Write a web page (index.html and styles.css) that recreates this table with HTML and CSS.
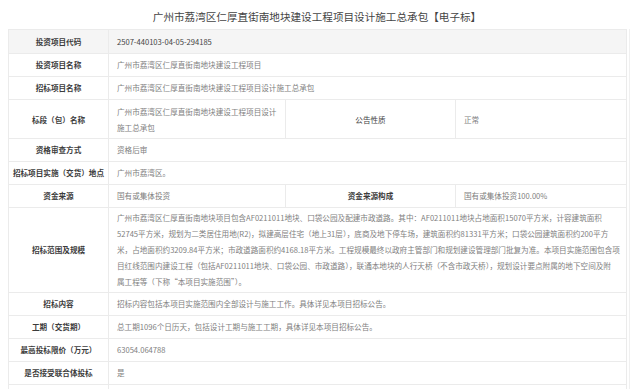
FILE: index.html
```html
<!DOCTYPE html>
<html lang="zh-CN">
<head>
<meta charset="utf-8">
<link rel="stylesheet" href="styles.css">
</head>
<body>
<div class="page">
  <h1 class="title">广州市荔湾区仁厚直街南地块建设工程项目设计施工总承包【电子标】</h1>
  <div class="frame">
  <table class="info">
    <colgroup>
      <col class="c1"><col class="c2"><col class="c3"><col class="c4">
    </colgroup>
    <tr class="head">
      <th>投资项目代码</th><td colspan="3">2507-440103-04-05-294185</td>
    </tr>
    <tr>
      <th>投资项目名称</th><td colspan="3">广州市荔湾区仁厚直街南地块建设工程项目</td>
    </tr>
    <tr>
      <th>招标项目名称</th><td colspan="3">广州市荔湾区仁厚直街南地块建设工程项目设计施工总承包</td>
    </tr>
    <tr class="tall">
      <th>标段（包）名称</th><td>广州市荔湾区仁厚直街南地块建设工程项目设计<br>施工总承包</td>
      <th class="plain">公告性质</th><td>正常</td>
    </tr>
    <tr>
      <th>资格审查方式</th><td colspan="3">资格后审</td>
    </tr>
    <tr>
      <th class="long">招标项目实施（交货）地点</th><td colspan="3">广州市荔湾区。</td>
    </tr>
    <tr>
      <th>资金来源</th><td>国有或集体投资</td>
      <th>资金来源构成</th><td>国有或集体投资100.00%</td>
    </tr>
    <tr>
      <th>招标范围及规模</th>
      <td colspan="3" class="multi">广州市荔湾区仁厚直街南地块项目包含AF0211011地块、口袋公园及配建市政道路。其中：AF0211011地块占地面积15070平方米，计容建筑面积<br>52745平方米，规划为二类居住用地(R2)，拟建高层住宅（地上31层），底商及地下停车场，建筑面积约81331平方米；口袋公园建筑面积约200平方<br>米，占地面积约3209.84平方米；市政道路面积约4168.18平方米。工程规模最终以政府主管部门和规划建设管理部门批复为准。本项目实施范围包含项<br>目红线范围内建设工程（包括AF0211011地块、口袋公园、市政道路），联通本地块的人行天桥（不含市政天桥），规划设计要点附属的地下空间及附<br>属工程等（下称“本项目实施范围”）。</td>
    </tr>
    <tr>
      <th>招标内容</th><td colspan="3">招标内容包括本项目实施范围内全部设计与施工工作。具体详见本项目招标公告。</td>
    </tr>
    <tr>
      <th>工期（交货期）</th><td colspan="3">总工期1096个日历天，包括设计工期与施工工期，具体详见本项目招标公告。</td>
    </tr>
    <tr>
      <th>最高投标限价（万元）</th><td colspan="3">63054.064788</td>
    </tr>
    <tr>
      <th>是否接受联合体投标</th><td colspan="3">是</td>
    </tr>
    <tr>
      <th>&nbsp;</th><td colspan="3">&nbsp;</td>
    </tr>
  </table>
  </div>
</div>
</body>
</html>
```
FILE: styles.css
```css
html, body {
  margin: 0;
  padding: 0;
  background: #fff;
}
body {
  font-family: "Noto Sans CJK SC", "Noto Sans", sans-serif;
  color: #333;
}
.page {
  width: 624px;
  padding: 0 0 0 8px;
}
.title {
  margin: 0;
  padding-top: 5px;
  height: 24px;
  line-height: 24px;
  font-size: 10.6px;
  font-weight: normal;
  text-align: center;
  color: #444;
  width: 618px;
}
.frame {
  width: 621px;
  border-right: 1px solid #f0f0f0;
}
.info {
  width: 618px;
  border-collapse: collapse;
  table-layout: fixed;
  font-size: 7.6px;
  border: 1px solid #e8e8e8;
}
.c1 { width: 100px; }
.c2 { width: 177px; }
.c3 { width: 170px; }
.c4 { width: 171px; }
.info th, .info td {
  border: 1px solid #ebebeb;
  line-height: 16px;
  padding: 3px 8px;
  vertical-align: middle;
  white-space: nowrap;
}
.info th {
  font-weight: bold;
  color: #3c3c3c;
  text-align: center;
  padding: 3px 0;
}
.info th.plain {
  font-weight: normal;
  color: #444;
}
.info td {
  color: #808080;
  text-align: left;
}
.info .head th, .info .head td {
  background: #f5f5f5;
  padding-top: 4px;
  padding-bottom: 3px;
}
.info .head td { color: #444; }
.info .tall td, .info .tall th {
  padding-top: 4px;
  padding-bottom: 3px;
  line-height: 15.5px;
}
.info td.multi {
  line-height: 16px;
  padding-top: 2px;
  padding-bottom: 2px;
}
```
